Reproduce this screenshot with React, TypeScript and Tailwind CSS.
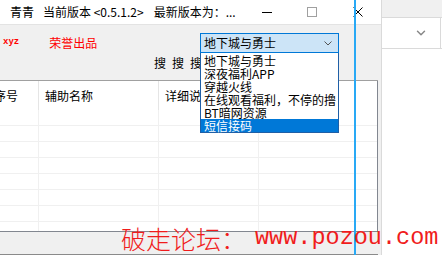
import { ChevronDown } from 'lucide-react';

const ITEMS = ['地下城与勇士', '深夜福利APP', '穿越火线', '在线观看福利，不停的撸', 'BT暗网资源', '短信接码'];

const ROWS = [0, 1, 2, 3, 4, 5, 6, 7];

function TitleBar() {
  return (
    <div className="flex h-[24px] items-center bg-white text-[12px] text-black">
      <span className="ml-[10px]">青青</span>
      <span className="ml-[9px]">当前版本 &lt;0.5.1.2&gt;</span>
      <span className="ml-[10px]">最新版本为：...</span>
      <div className="ml-auto flex items-center">
        <span className="h-px w-[10px] bg-black" />
        <span className="ml-[35px] h-[10px] w-[10px] border border-[#a0a0a0]" />
        <svg className="ml-[36px] mr-[18px]" width="10" height="10" viewBox="0 0 10 10">
          <path d="M0.5 0.5 L9.5 9.5 M9.5 0.5 L0.5 9.5" stroke="#000" strokeWidth="1" />
        </svg>
      </div>
    </div>
  );
}

function Dropdown() {
  return (
    <div className="relative ml-auto mr-[39px] w-[139px]">
      <div className="flex h-[20px] items-center border border-[#0078d7] bg-[#cce4f7] pl-[3px] pr-[6px] text-[12px] text-black">
        <span>地下城与勇士</span>
        <svg className="ml-auto" width="8" height="5" viewBox="0 0 8 5">
          <path d="M0.5 0.5 L4 4 L7.5 0.5" fill="none" stroke="#555" strokeWidth="1" />
        </svg>
      </div>
      {/* open list */}
      <ul className="absolute left-0 top-[20px] z-10 w-[139px] border border-t-0 border-[#1f5fa6] bg-white pt-px text-[12px] leading-[13px] text-black">
        {ITEMS.map((item, i) => (
          <li
            key={item}
            className={`h-[13px] pl-[3px] whitespace-nowrap ${i === ITEMS.length - 1 ? 'bg-[#0078d7] text-white' : ''}`}
          >
            {item}
          </li>
        ))}
      </ul>
    </div>
  );
}

function Panel() {
  return (
    <div className="h-[55px] bg-[#f0f0f0] pt-[8px]">
      <div className="flex h-[20px] items-center">
        <span className="ml-[3px] font-['Liberation_Mono',monospace] text-[9px] font-bold text-[#ff0000]">xyz</span>
        <span className="ml-[30px] text-[12px] text-[#ff0000]">荣誉出品</span>
        <Dropdown />
      </div>
      <div className="ml-[154px] mt-[3px] flex gap-[6px] text-[12px] leading-[14px] text-black">
        <span>搜</span>
        <span>搜</span>
        <span>搜</span>
      </div>
    </div>
  );
}

function Table() {
  return (
    <div className="flex h-[151px] flex-col border-b border-r border-[#828790] bg-white">
      <div className="flex h-[29px] shrink-0 items-center text-[12px] text-black">
        <div className="flex h-full w-[39px] items-center border-r border-[#e5e5e5]">
          <span className="-ml-[6px]">序号</span>
        </div>
        <div className="flex h-full w-[120px] items-center border-r border-[#e5e5e5] pl-[6px]">辅助名称</div>
        <div className="flex h-full w-[100px] items-center border-r border-[#e5e5e5] pl-[6px] whitespace-nowrap overflow-hidden">详细说明</div>
        <div className="flex-1" />
      </div>
      <div className="flex-1 overflow-hidden">
        {ROWS.map((r) => (
          <div key={r} className="flex h-[16px] border-b border-[#f0f0f0]">
            <div className="w-[39px] border-r border-[#f0f0f0]" />
            <div className="w-[120px] border-r border-[#f0f0f0]" />
            <div className="w-[100px] border-r border-[#f0f0f0]" />
            <div className="flex-1" />
          </div>
        ))}
      </div>
    </div>
  );
}

function BackApp() {
  return (
    <div className="flex flex-1 flex-col border-l border-[#dadada]">
      <div className="h-[17px] bg-[#f0f0f0]" />
      <div className="flex h-[32px] items-center justify-end border-y border-[#dadada] bg-white">
        <ChevronDown size={14} strokeWidth={2.5} className="mr-[12px] text-[#888]" />
        <span className="h-full w-px bg-[#dadada]" />
        <span className="w-px" />
      </div>
      <div className="flex-1 bg-white" />
    </div>
  );
}

export default function App() {
  return (
    <div className="relative flex h-[255px] w-[442px] overflow-hidden bg-white font-['Noto_Sans_CJK_SC',sans-serif]">
      {/* main window */}
      <div className="flex w-[381px] flex-col">
        <TitleBar />
        <div className="h-px bg-[#e3e3e3]" />
        <div className="flex flex-1 flex-col bg-[#f0f0f0] pr-[3px]">
          <Panel />
          <div className="h-px bg-[#a0a0a0]" />
          <Table />
          <div className="flex-1" />
          <div className="h-px bg-[#8a8a8a]" />
        </div>
      </div>

      <BackApp />

      {/* cursor guide line */}
      <div className="absolute left-[354px] top-0 z-20 h-full w-[2px] bg-[#29a9f5]" />

      {/* watermark */}
      <div className="pointer-events-none absolute left-[121px] top-[224px] z-30 flex items-center whitespace-nowrap text-[#f01c1c]">
        <span className="text-[25px] font-light leading-[28px]">破走论坛：</span>
        <span className="ml-[9px] font-['Liberation_Mono',monospace] text-[23.5px] leading-[28px]">www.pozou.com</span>
      </div>
    </div>
  );
}
